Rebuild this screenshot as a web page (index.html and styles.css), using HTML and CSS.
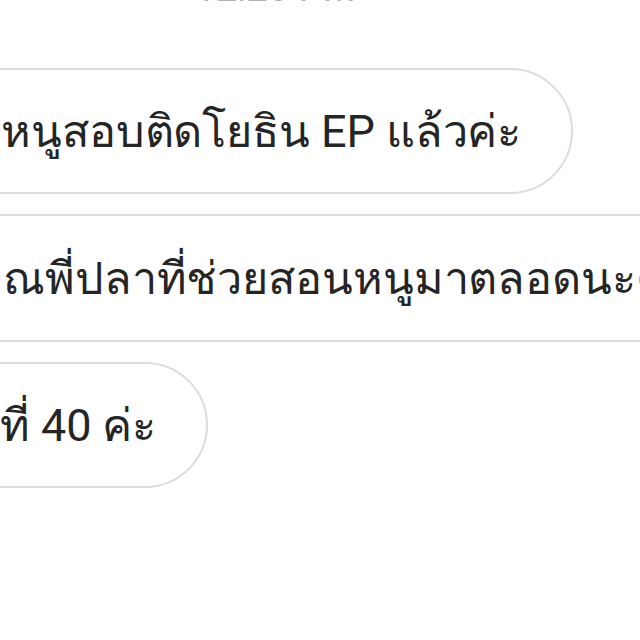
FILE: index.html
```html
<!DOCTYPE html>
<html lang="th">
<head>
    <meta charset="UTF-8">
    <meta name="viewport" content="width=device-width, initial-scale=1.0">
    <title>แชท</title>
    <link rel="stylesheet" href="styles.css">
</head>
<body>
    <div class="chat">
        <div class="time">12:28 PM</div>

        <div class="bubble first">หนูสอบติดโยธิน EP แล้วค่ะ</div>
        <div class="bubble wide">ณพี่ปลาที่ช่วยสอนหนูมาตลอดนะคะ</div>
        <div class="bubble last">ที่ 40 ค่ะ</div>
    </div>
</body>
</html>
```

FILE: styles.css
```css
* {
    margin: 0;
    padding: 0;
    box-sizing: border-box;
}

html, body {
    width: 640px;
    height: 640px;
    overflow: hidden;
}

body {
    font-family: Roboto, "Noto Sans", sans-serif;
    background-color: #fff;
    color: #252525;
}

.chat {
    display: flex;
    flex-direction: column;
    align-items: flex-start;
    gap: 20px;
}

.time {
    align-self: stretch;
    text-align: center;
    margin-right: 90px;
    margin-top: -34px;
    margin-bottom: 38px;
    font-size: 38px;
    line-height: 44px;
    color: #b0b0b0;
}

.bubble {
    display: flex;
    align-items: center;
    height: 126px;
    margin-left: -60px;
    padding: 0 50px 0 59px;
    border: 2px solid #dcdcdc;
    border-radius: 64px;
    background: #fff;
    font-size: 45px;
    letter-spacing: -0.1px;
    white-space: nowrap;
}

.bubble.wide {
    height: 128px;
    padding-left: 61px;
}

.bubble.last {
    padding-left: 58px;
}
```
